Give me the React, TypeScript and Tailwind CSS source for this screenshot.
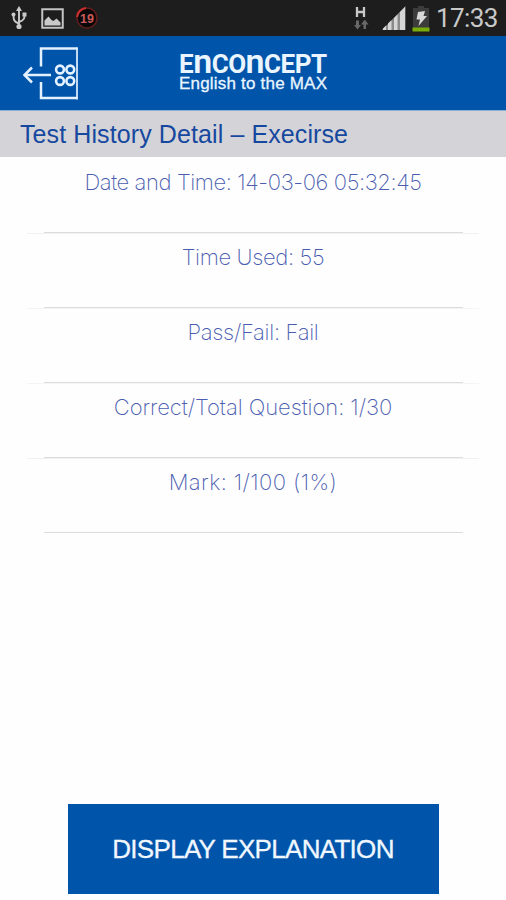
import React from "react";

type Row = { text: string; tracking: string; outer: string };

const rows: Row[] = [
  { text: "Date and Time: 14-03-06 05:32:45", tracking: "tracking-[-0.4px]", outer: "bg-[#f1f1f1]" },
  { text: "Time Used: 55", tracking: "tracking-[-0.35px]", outer: "bg-[#f4f4f4]" },
  { text: "Pass/Fail: Fail", tracking: "tracking-[-0.3px]", outer: "bg-[#f4f4f4]" },
  { text: "Correct/Total Question: 1/30", tracking: "tracking-[-0.05px]", outer: "bg-[#f1f1f1]" },
  { text: "Mark: 1/100 (1%)", tracking: "tracking-[0.4px]", outer: "bg-[#fefefe]" },
];

function UsbIcon() {
  return (
    <svg className="h-[26px] w-[18px]" viewBox="0 0 18 26" fill="none" stroke="#c9c9c9" strokeWidth="1.9">
      <path d="M9 4v17M9 18.500C3.500 16.500 3.500 14.500 3.500 10M9 17c5.500-2 5.500-4 5.500-7" />
      <path d="M9 1l3 5H6z" fill="#c9c9c9" stroke="none" />
      <circle cx="9" cy="21.500" r="2.600" fill="#c9c9c9" stroke="none" />
      <circle cx="3.500" cy="9.500" r="2" fill="#c9c9c9" stroke="none" />
      <path d="M12.500 7.500h4v4h-4z" fill="#c9c9c9" stroke="none" />
    </svg>
  );
}

function PictureIcon() {
  return (
    <svg className="h-[21px] w-[23px]" viewBox="0 0 23 21">
      <rect x="1.250" y="1.250" width="20.500" height="18.500" fill="#1d1d1d" stroke="#c4c4c4" strokeWidth="2" />
      <path d="M3.500 17.500v-5l4-4 3 3.500 2 1 3-2.500 4 4v3z" fill="#c9c9c9" />
    </svg>
  );
}

function CounterIcon() {
  return (
    <svg className="h-6 w-6" viewBox="0 0 24 24">
      <circle cx="12" cy="12" r="10" fill="#080808" stroke="#601d1d" strokeWidth="1.500" />
      <path d="M2 11A10 10 0 0 1 11 2" fill="none" stroke="#c92f2d" strokeWidth="2.200" />
      <text x="12" y="16.500" textAnchor="middle" fill="#c95a5c" fontFamily="Liberation Sans, sans-serif" fontSize="12.500" fontWeight="700">19</text>
    </svg>
  );
}

function NetworkIcon() {
  return (
    <svg className="h-[26px] w-4" viewBox="0 0 16 26">
      <path d="M4 2v10M11 2v10M4 7h7" stroke="#c8c8c8" strokeWidth="2.300" fill="none" />
      <path d="M3 15.500v4.500H1l3.500 4.500L8 20H6v-4.500zM10.500 24v-4.500H8l3.800-5 3.700 5h-2.500V24z" fill="#686868" />
    </svg>
  );
}

function SignalIcon() {
  return (
    <svg className="h-6 w-6" viewBox="0 0 24 24">
      <path d="M0 24L23.500 0v24z" fill="#8b8b8b" />
      <path d="M1 24v-1.500l3-3V24zM6 24v-6.500l3.500-3.500V24zM12 24V12l3.500-3.500V24zM18 24V6l5-5v23z" fill="#d6d6d6" />
    </svg>
  );
}

function BatteryIcon() {
  return (
    <svg className="h-[26px] w-[18px]" viewBox="0 0 18 26">
      <path d="M6 0h6v2h5v23H1V2h5z" fill="#3c3c3c" />
      <path d="M0.500 21.500h17V25.500H0.500z" fill="#7bac0d" />
      <path d="M6 6l7-1-1.500 5H15L6.500 20 8 13.500H4.500z" fill="#d8d8d8" />
    </svg>
  );
}

function StatusBar() {
  return (
    <div className="flex h-9 items-center bg-[#1d1d1d]">
      <div className="flex items-center pl-[10px]">
        <UsbIcon />
        <div className="pl-[13px]"><PictureIcon /></div>
        <div className="pl-[11px]"><CounterIcon /></div>
      </div>
      <div className="ml-auto flex items-center pr-[7px]">
        <NetworkIcon />
        <div className="pl-[13px]"><SignalIcon /></div>
        <div className="pl-[6px] pt-[2px]"><BatteryIcon /></div>
        <span className="w-[69px] whitespace-nowrap pl-[6px] font-['Roboto',sans-serif] text-[26px] leading-9 tracking-[-0.6px] text-[#c8c8c8]">17:33</span>
      </div>
    </div>
  );
}

function BackIcon() {
  return (
    <svg className="h-[54px] w-[57px]" viewBox="0 0 57 54" fill="none" stroke="#e4f1ff">
      <path d="M19 20.500V2.500H55.500M19 36v16H55.500" strokeWidth="2.500" />
      <path d="M55 1.500v52" strokeWidth="1.700" />
      <path d="M2 29h27" strokeWidth="2.500" />
      <path d="M10 21.500L2.500 29l7.500 7.500" strokeWidth="2.500" />
      <g strokeWidth="2.600">
        <circle cx="38" cy="23.500" r="3.900" />
        <circle cx="48.300" cy="23.500" r="3.900" />
        <circle cx="38" cy="35" r="3.900" />
        <circle cx="48.300" cy="35" r="3.900" />
      </g>
    </svg>
  );
}

function Header() {
  return (
    <header className="flex h-[74px] bg-[#0055aa] text-[#eaf5ff]">
      <button className="flex w-[179px] items-start pl-[22px] pt-[10px]" aria-label="Back"><BackIcon /></button>
      <div className="flex flex-col whitespace-nowrap pt-[13px]">
        <div className="flex h-[24px] items-baseline font-['Roboto',sans-serif] text-[26px] font-bold leading-[24px] tracking-[-0.5px]">
          <span>E</span><span className="text-[34px] font-semibold lowercase leading-[24px]">N</span><span>CO</span><span className="text-[34px] font-semibold lowercase leading-[24px]">N</span><span>CEPT</span>
        </div>
        <div className="pt-px font-['Liberation_Sans',sans-serif] text-[17px] leading-[20px] tracking-[0.2px] [-webkit-text-stroke:0.3px_#eaf5ff]">English to the MAX</div>
      </div>
    </header>
  );
}

export default function App() {
  return (
    <div className="flex h-[900px] w-[506px] flex-col overflow-hidden bg-[#fefefe] font-['Liberation_Sans',sans-serif]">
      <StatusBar />
      <Header />
      <h1 className="h-[47px] whitespace-nowrap border-t border-[#8caed0] bg-[#d4d4d8] pl-5 text-[25px] leading-[47px] tracking-[0.1px] text-[#1748a0]">Test History Detail – Execirse</h1>
      <main className="flex flex-1 flex-col pt-[2px]">
        {rows.map((row) => (
          <section key={row.text} className="flex h-[75px] flex-col">
            <p className={`flex-1 whitespace-nowrap pt-[7px] text-center font-['Inter',sans-serif] text-[22px] font-extralight leading-[32px] text-[#4a5db0] ${row.tracking}`}>{row.text}</p>
            <div className="ml-11 mr-[43px] h-px bg-[#dcdcdc]" />
            <div className={`mx-[27px] h-px ${row.outer}`} />
          </section>
        ))}
        <button className="mx-auto mb-[6px] mt-auto h-[90px] w-[371px] whitespace-nowrap bg-[#0055aa] text-[26px] tracking-[-0.7px] text-[#f0f7ff] [-webkit-text-stroke:0.3px_#f0f7ff]">DISPLAY EXPLANATION</button>
      </main>
    </div>
  );
}
